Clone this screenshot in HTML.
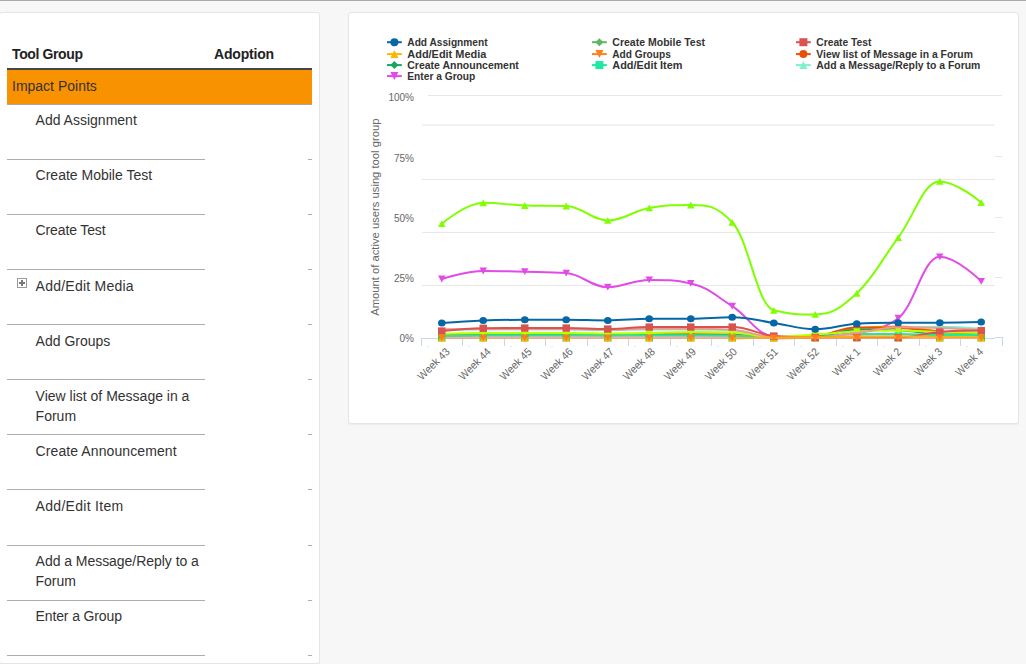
<!DOCTYPE html>
<html><head><meta charset="utf-8"><title>Tool adoption</title>
<style>
html,body{margin:0;padding:0}
body{width:1026px;height:664px;overflow:hidden;background:#f7f7f7;position:relative;font-family:"Liberation Sans",sans-serif;color:#333}
.topbar{position:absolute;left:0;top:0;width:1026px;height:1px;background:#a9a9a9}
.card{position:absolute;background:#fff;border:1px solid #e5e5e5;border-radius:3px;box-sizing:border-box;box-shadow:0 1px 1px rgba(0,0,0,.05)}
#c1{left:-1px;top:12px;width:321px;height:652px}
#c2{left:348px;top:12px;width:671px;height:412px}
.th{position:absolute;font-weight:bold;font-size:14px;line-height:20px;white-space:nowrap;color:#222;letter-spacing:-0.38px}
.hb{position:absolute;left:7px;top:68px;width:305px;height:2px;background:#444}
.imp{position:absolute;left:7px;top:70px;width:305px;height:34px;background:#f99200;border-bottom:1px solid #aaa}
.imp span{position:absolute;left:5px;top:6px;font-size:14px;line-height:20px;white-space:nowrap;color:#333}
.rw{position:absolute;left:35.6px;font-size:14px;line-height:20px;white-space:nowrap;color:#333}
.ln{position:absolute;left:7px;width:198px;height:1px;background:#adadad}
.tk{position:absolute;left:308px;width:4px;height:1px;background:#adadad}
.plus{position:absolute;left:17px;top:278px;width:10px;height:10px;box-sizing:border-box;border:1px solid #9a9a9a;background:#fff}
.plus i{position:absolute;left:1px;top:3px;width:6px;height:2px;background:#7a7a7a}
.plus b{position:absolute;left:3px;top:1px;width:2px;height:6px;background:#7a7a7a}
svg.chart{position:absolute;left:0;top:0}
svg text{font-family:"Liberation Sans",sans-serif}
.ax{font-size:11px;fill:#666}
.ay{font-size:10px;fill:#666}
.lg{font-size:11px;font-weight:bold;fill:#333}
</style></head><body>
<div class="topbar"></div>
<div class="card" id="c1"></div>
<div class="card" id="c2"></div>
<div class="th" style="left:12px;top:44px">Tool Group</div>
<div class="th" style="left:214px;top:44px;letter-spacing:-0.18px">Adoption</div>
<div class="hb"></div>
<div class="imp"><span>Impact Points</span></div>
<div class="rw" style="top:110px">Add Assignment</div>
<div class="ln" style="top:159px"></div><div class="tk" style="top:159px"></div>
<div class="rw" style="top:165px">Create Mobile Test</div>
<div class="ln" style="top:214px"></div><div class="tk" style="top:214px"></div>
<div class="rw" style="top:220px;letter-spacing:-0.13px">Create Test</div>
<div class="ln" style="top:269px"></div><div class="tk" style="top:269px"></div>
<div class="rw" style="top:276px;letter-spacing:0.24px">Add/Edit Media</div>
<div class="ln" style="top:324px"></div><div class="tk" style="top:324px"></div>
<div class="rw" style="top:331px">Add Groups</div>
<div class="ln" style="top:379px"></div><div class="tk" style="top:379px"></div>
<div class="rw" style="top:386px">View list of Message in a<br>Forum</div>
<div class="ln" style="top:434px"></div><div class="tk" style="top:434px"></div>
<div class="rw" style="top:441px;letter-spacing:0.09px">Create Announcement</div>
<div class="ln" style="top:489px"></div><div class="tk" style="top:489px"></div>
<div class="rw" style="top:496px;letter-spacing:0.3px">Add/Edit Item</div>
<div class="ln" style="top:545px"></div><div class="tk" style="top:545px"></div>
<div class="rw" style="top:551px;letter-spacing:-0.04px">Add a Message/Reply to a<br>Forum</div>
<div class="ln" style="top:600px"></div><div class="tk" style="top:600px"></div>
<div class="rw" style="top:606px;letter-spacing:-0.13px">Enter a Group</div>
<div class="ln" style="top:655px"></div><div class="tk" style="top:655px"></div>
<div class="plus"><i></i><b></b></div>
<svg class="chart" width="1026" height="664" viewBox="0 0 1026 664">
<path d="M428 95.5H1002" stroke="#e6e6e6" stroke-width="1" fill="none"/>
<path d="M995 156.5H1002" stroke="#e6e6e6" stroke-width="1" fill="none"/>
<path d="M995 217.5H1002" stroke="#e6e6e6" stroke-width="1" fill="none"/>
<path d="M995 277.5H1002" stroke="#e6e6e6" stroke-width="1" fill="none"/>
<path d="M422 125.0H995" stroke="#e6e6e6" stroke-width="1" fill="none"/>
<path d="M422 179.4H995" stroke="#e6e6e6" stroke-width="1" fill="none"/>
<path d="M422 232.4H995" stroke="#e6e6e6" stroke-width="1" fill="none"/>
<path d="M422 285.4H995" stroke="#e6e6e6" stroke-width="1" fill="none"/>
<path d="M421 338.5H995M995 337.5H1002" stroke="#ccd6eb" stroke-width="1" fill="none"/>
<path d="M421.5 338V346M462.5 338V346M504.5 338V346M545.5 338V346M587.5 338V346M628.5 338V346M670.5 338V346M711.5 338V346M753.5 338V346M794.5 338V346M836.5 338V346M877.5 338V346M919.5 338V346M960.5 338V346M1002.5 337V346" stroke="#ccd6eb" stroke-width="1" fill="none"/>
<path d="M427.0 346.5h2M468.0 346.5h2M510.0 346.5h2M551.0 346.5h2M593.0 346.5h2M634.0 346.5h2M676.0 346.5h2M717.0 346.5h2M759.0 346.5h2M800.0 346.5h2M842.0 346.5h2M883.0 346.5h2M925.0 346.5h2M966.0 346.5h2" stroke="#e4e8f2" stroke-width="1" fill="none"/>
<text x="414" y="101" text-anchor="end" class="ay">100%</text>
<text x="414" y="162" text-anchor="end" class="ay">75%</text>
<text x="414" y="222" text-anchor="end" class="ay">50%</text>
<text x="414" y="282" text-anchor="end" class="ay">25%</text>
<text x="414" y="342" text-anchor="end" class="ay">0%</text>
<text transform="translate(379.2,217.2) rotate(-90)" text-anchor="middle" class="ax" textLength="197.3" lengthAdjust="spacingAndGlyphs">Amount of active users using tool group</text>
<text transform="translate(450.4,352.4) rotate(-45)" text-anchor="end" class="ax" textLength="40.0" lengthAdjust="spacingAndGlyphs">Week 43</text>
<text transform="translate(491.5,352.4) rotate(-45)" text-anchor="end" class="ax" textLength="40.0" lengthAdjust="spacingAndGlyphs">Week 44</text>
<text transform="translate(532.5,352.4) rotate(-45)" text-anchor="end" class="ax" textLength="40.0" lengthAdjust="spacingAndGlyphs">Week 45</text>
<text transform="translate(573.6,352.4) rotate(-45)" text-anchor="end" class="ax" textLength="40.0" lengthAdjust="spacingAndGlyphs">Week 46</text>
<text transform="translate(614.6,352.4) rotate(-45)" text-anchor="end" class="ax" textLength="40.0" lengthAdjust="spacingAndGlyphs">Week 47</text>
<text transform="translate(655.7,352.4) rotate(-45)" text-anchor="end" class="ax" textLength="40.0" lengthAdjust="spacingAndGlyphs">Week 48</text>
<text transform="translate(696.7,352.4) rotate(-45)" text-anchor="end" class="ax" textLength="40.0" lengthAdjust="spacingAndGlyphs">Week 49</text>
<text transform="translate(737.7,352.4) rotate(-45)" text-anchor="end" class="ax" textLength="40.0" lengthAdjust="spacingAndGlyphs">Week 50</text>
<text transform="translate(778.8,352.4) rotate(-45)" text-anchor="end" class="ax" textLength="40.0" lengthAdjust="spacingAndGlyphs">Week 51</text>
<text transform="translate(819.8,352.4) rotate(-45)" text-anchor="end" class="ax" textLength="40.0" lengthAdjust="spacingAndGlyphs">Week 52</text>
<text transform="translate(860.9,352.4) rotate(-45)" text-anchor="end" class="ax" textLength="34.3" lengthAdjust="spacingAndGlyphs">Week 1</text>
<text transform="translate(901.9,352.4) rotate(-45)" text-anchor="end" class="ax" textLength="34.3" lengthAdjust="spacingAndGlyphs">Week 2</text>
<text transform="translate(942.9,352.4) rotate(-45)" text-anchor="end" class="ax" textLength="34.3" lengthAdjust="spacingAndGlyphs">Week 3</text>
<text transform="translate(984.0,352.4) rotate(-45)" text-anchor="end" class="ax" textLength="34.3" lengthAdjust="spacingAndGlyphs">Week 4</text>
<path d="M441.8 337.2 C441.8 337.2 466.6 337.2 483.2 337.2 C499.9 337.2 508.1 337.2 524.8 337.2 C541.4 337.2 549.6 337.2 566.2 337.2 C582.9 337.2 591.1 337.2 607.8 337.2 C624.4 337.2 632.6 337.2 649.2 337.2 C665.9 337.2 674.1 337.2 690.8 337.2 C707.4 337.2 715.6 337.2 732.2 337.2 C748.9 337.2 757.1 337.6 773.8 337.6 C790.4 337.6 798.6 337.6 815.2 337.6 C831.9 337.6 840.1 336.0 856.8 336.0 C873.4 336.0 881.6 336.3 898.2 336.5 C914.9 336.7 923.1 337.0 939.8 337.0 C956.4 337.0 981.2 337.0 981.2 337.0" stroke="#ffb3e6" stroke-width="2" fill="none" stroke-linejoin="round" stroke-linecap="round"/>
<path d="M441.8 279.0 C441.8 279.0 466.6 271.0 483.2 271.0 C499.9 271.0 508.1 271.3 524.8 271.7 C541.4 272.1 549.6 271.7 566.2 273.1 C582.9 274.5 591.1 287.2 607.8 287.2 C624.4 287.2 632.6 279.9 649.2 279.9 C665.9 279.9 674.1 279.9 690.8 283.4 C707.4 286.9 715.6 295.6 732.2 306.2 C748.9 316.8 757.1 335.6 773.8 336.3 C790.4 337.0 798.6 337.0 815.2 337.0 C831.9 337.0 840.1 334.8 856.8 331.0 C873.4 327.2 881.6 331.0 898.2 318.2 C914.9 305.4 923.1 256.8 939.8 256.8 C956.4 256.8 981.2 281.3 981.2 281.3" stroke="#e14be6" stroke-width="2" fill="none" stroke-linejoin="round" stroke-linecap="round"/>
<path d="M438.0 275.6L445.5 275.6L441.8 282.4Z" fill="#e14be6"/><path d="M479.5 267.6L487.0 267.6L483.2 274.4Z" fill="#e14be6"/><path d="M521.0 268.3L528.5 268.3L524.8 275.1Z" fill="#e14be6"/><path d="M562.5 269.7L570.0 269.7L566.2 276.5Z" fill="#e14be6"/><path d="M604.0 283.8L611.5 283.8L607.8 290.6Z" fill="#e14be6"/><path d="M645.5 276.5L653.0 276.5L649.2 283.3Z" fill="#e14be6"/><path d="M687.0 280.0L694.5 280.0L690.8 286.8Z" fill="#e14be6"/><path d="M728.5 302.8L736.0 302.8L732.2 309.6Z" fill="#e14be6"/><path d="M770.0 332.9L777.5 332.9L773.8 339.7Z" fill="#e14be6"/><path d="M811.5 333.6L819.0 333.6L815.2 340.4Z" fill="#e14be6"/><path d="M853.0 327.6L860.5 327.6L856.8 334.4Z" fill="#e14be6"/><path d="M894.5 314.8L902.0 314.8L898.2 321.6Z" fill="#e14be6"/><path d="M936.0 253.4L943.5 253.4L939.8 260.2Z" fill="#e14be6"/><path d="M977.5 277.9L985.0 277.9L981.2 284.7Z" fill="#e14be6"/>
<path d="M441.8 330.3 C441.8 330.3 466.6 329.6 483.2 329.6 C499.9 329.6 508.1 329.6 524.8 329.6 C541.4 329.6 549.6 329.6 566.2 329.6 C582.9 329.6 591.1 330.2 607.8 330.2 C624.4 330.2 632.6 329.4 649.2 329.4 C665.9 329.4 674.1 329.4 690.8 329.4 C707.4 329.4 715.6 329.4 732.2 330.2 C748.9 331.0 757.1 337.0 773.8 337.0 C790.4 337.0 798.6 337.0 815.2 336.0 C831.9 335.0 840.1 331.2 856.8 329.5 C873.4 327.8 881.6 328.0 898.2 327.5 C914.9 327.0 923.1 326.8 939.8 326.8 C956.4 326.8 981.2 328.8 981.2 328.8" stroke="#7ff0cc" stroke-width="2" fill="none" stroke-linejoin="round" stroke-linecap="round"/>
<path d="M441.8 326.9L445.5 333.7L438.0 333.7Z" fill="#7ff0cc"/><path d="M483.2 326.2L487.0 333.0L479.5 333.0Z" fill="#7ff0cc"/><path d="M524.8 326.2L528.5 333.0L521.0 333.0Z" fill="#7ff0cc"/><path d="M566.2 326.2L570.0 333.0L562.5 333.0Z" fill="#7ff0cc"/><path d="M607.8 326.8L611.5 333.6L604.0 333.6Z" fill="#7ff0cc"/><path d="M649.2 326.0L653.0 332.8L645.5 332.8Z" fill="#7ff0cc"/><path d="M690.8 326.0L694.5 332.8L687.0 332.8Z" fill="#7ff0cc"/><path d="M732.2 326.8L736.0 333.6L728.5 333.6Z" fill="#7ff0cc"/><path d="M773.8 333.6L777.5 340.4L770.0 340.4Z" fill="#7ff0cc"/><path d="M815.2 332.6L819.0 339.4L811.5 339.4Z" fill="#7ff0cc"/><path d="M856.8 326.1L860.5 332.9L853.0 332.9Z" fill="#7ff0cc"/><path d="M898.2 324.1L902.0 330.9L894.5 330.9Z" fill="#7ff0cc"/><path d="M939.8 323.4L943.5 330.2L936.0 330.2Z" fill="#7ff0cc"/><path d="M981.2 325.4L985.0 332.2L977.5 332.2Z" fill="#7ff0cc"/>
<path d="M773.8 338.4 C773.8 338.4 798.6 338.4 815.2 337.3 C831.9 336.2 840.1 330.0 856.8 328.3 C873.4 326.6 881.6 326.6 898.2 326.6 C914.9 326.6 923.1 330.1 939.8 331.5 C956.4 332.9 981.2 333.5 981.2 333.5" stroke="#ff8c00" stroke-width="2" fill="none" stroke-linejoin="round" stroke-linecap="round"/>
<path d="M441.8 334.5 C441.8 334.5 466.6 334.0 483.2 334.0 C499.9 334.0 508.1 334.0 524.8 334.0 C541.4 334.0 549.6 334.0 566.2 334.0 C582.9 334.0 591.1 334.3 607.8 334.3 C624.4 334.3 632.6 334.3 649.2 334.3 C665.9 334.3 674.1 334.3 690.8 334.3 C707.4 334.3 715.6 334.3 732.2 334.6 C748.9 334.9 757.1 337.3 773.8 337.3 C790.4 337.3 798.6 337.3 815.2 336.0 C831.9 334.7 840.1 327.4 856.8 327.4 C873.4 327.4 881.6 327.4 898.2 328.0 C914.9 328.6 923.1 330.5 939.8 331.5 C956.4 332.5 981.2 333.0 981.2 333.0" stroke="#e8500a" stroke-width="2" fill="none" stroke-linejoin="round" stroke-linecap="round"/>
<ellipse cx="441.8" cy="334.5" rx="3.75" ry="3.40" fill="#e8500a"/><ellipse cx="483.2" cy="334.0" rx="3.75" ry="3.40" fill="#e8500a"/><ellipse cx="524.8" cy="334.0" rx="3.75" ry="3.40" fill="#e8500a"/><ellipse cx="566.2" cy="334.0" rx="3.75" ry="3.40" fill="#e8500a"/><ellipse cx="607.8" cy="334.3" rx="3.75" ry="3.40" fill="#e8500a"/><ellipse cx="649.2" cy="334.3" rx="3.75" ry="3.40" fill="#e8500a"/><ellipse cx="690.8" cy="334.3" rx="3.75" ry="3.40" fill="#e8500a"/><ellipse cx="732.2" cy="334.6" rx="3.75" ry="3.40" fill="#e8500a"/><ellipse cx="773.8" cy="337.3" rx="3.75" ry="3.40" fill="#e8500a"/><ellipse cx="815.2" cy="336.0" rx="3.75" ry="3.40" fill="#e8500a"/><ellipse cx="856.8" cy="327.4" rx="3.75" ry="3.40" fill="#e8500a"/><ellipse cx="898.2" cy="328.0" rx="3.75" ry="3.40" fill="#e8500a"/><ellipse cx="939.8" cy="331.5" rx="3.75" ry="3.40" fill="#e8500a"/><ellipse cx="981.2" cy="333.0" rx="3.75" ry="3.40" fill="#e8500a"/>
<path d="M441.8 335.8 C441.8 335.8 466.6 335.4 483.2 335.4 C499.9 335.4 508.1 335.4 524.8 335.4 C541.4 335.4 549.6 335.4 566.2 335.4 C582.9 335.4 591.1 335.5 607.8 335.5 C624.4 335.5 632.6 335.4 649.2 335.4 C665.9 335.4 674.1 335.4 690.8 335.4 C707.4 335.4 715.6 335.4 732.2 335.6 C748.9 335.8 757.1 337.5 773.8 337.5 C790.4 337.5 798.6 337.5 815.2 337.0 C831.9 336.5 840.1 329.5 856.8 329.5 C873.4 329.5 881.6 329.6 898.2 330.5 C914.9 331.4 923.1 333.5 939.8 334.0 C956.4 334.5 981.2 334.5 981.2 334.5" stroke="#18a562" stroke-width="1.5" fill="none" stroke-linejoin="round" stroke-linecap="round"/>
<path d="M441.8 335.8 C441.8 335.8 466.6 335.3 483.2 335.3 C499.9 335.3 508.1 335.3 524.8 335.3 C541.4 335.3 549.6 335.3 566.2 335.3 C582.9 335.3 591.1 335.4 607.8 335.4 C624.4 335.4 632.6 335.3 649.2 335.3 C665.9 335.3 674.1 335.3 690.8 335.3 C707.4 335.3 715.6 335.3 732.2 335.6 C748.9 335.9 757.1 337.4 773.8 337.4 C790.4 337.4 798.6 337.4 815.2 337.0 C831.9 336.6 840.1 334.0 856.8 334.0 C873.4 334.0 881.6 334.0 898.2 334.0 C914.9 334.0 923.1 335.0 939.8 335.0 C956.4 335.0 981.2 335.0 981.2 335.0" stroke="#1de9a0" stroke-width="2" fill="none" stroke-linejoin="round" stroke-linecap="round"/>
<rect x="438.0" y="333.9" width="7.5" height="3.8" fill="#1de9a0"/><rect x="479.5" y="333.4" width="7.5" height="3.8" fill="#1de9a0"/><rect x="521.0" y="333.4" width="7.5" height="3.8" fill="#1de9a0"/><rect x="562.5" y="333.4" width="7.5" height="3.8" fill="#1de9a0"/><rect x="604.0" y="333.5" width="7.5" height="3.8" fill="#1de9a0"/><rect x="645.5" y="333.4" width="7.5" height="3.8" fill="#1de9a0"/><rect x="687.0" y="333.4" width="7.5" height="3.8" fill="#1de9a0"/><rect x="728.5" y="333.7" width="7.5" height="3.8" fill="#1de9a0"/><rect x="770.0" y="335.5" width="7.5" height="3.8" fill="#1de9a0"/><rect x="811.5" y="335.1" width="7.5" height="3.8" fill="#1de9a0"/><rect x="853.0" y="332.1" width="7.5" height="3.8" fill="#1de9a0"/><rect x="894.5" y="332.1" width="7.5" height="3.8" fill="#1de9a0"/><rect x="936.0" y="333.1" width="7.5" height="3.8" fill="#1de9a0"/><rect x="977.5" y="333.1" width="7.5" height="3.8" fill="#1de9a0"/>
<rect x="438.0" y="334.6" width="7.5" height="6.8" fill="#3ad11f"/><rect x="479.5" y="334.6" width="7.5" height="6.8" fill="#3ad11f"/><rect x="521.0" y="334.6" width="7.5" height="6.8" fill="#3ad11f"/><rect x="562.5" y="334.6" width="7.5" height="6.8" fill="#3ad11f"/><rect x="604.0" y="334.6" width="7.5" height="6.8" fill="#3ad11f"/><rect x="645.5" y="334.6" width="7.5" height="6.8" fill="#3ad11f"/><rect x="687.0" y="334.6" width="7.5" height="6.8" fill="#3ad11f"/><rect x="728.5" y="334.6" width="7.5" height="6.8" fill="#3ad11f"/><rect x="770.0" y="334.6" width="7.5" height="6.8" fill="#3ad11f"/><rect x="811.5" y="334.6" width="7.5" height="6.8" fill="#3ad11f"/><rect x="853.0" y="334.6" width="7.5" height="6.8" fill="#3ad11f"/><rect x="894.5" y="334.6" width="7.5" height="6.8" fill="#3ad11f"/><rect x="936.0" y="334.6" width="7.5" height="6.8" fill="#3ad11f"/><rect x="977.5" y="334.6" width="7.5" height="6.8" fill="#3ad11f"/>
<path d="M441.8 334.6L445.5 341.4L438.0 341.4Z" fill="#ffb400"/><path d="M483.2 334.6L487.0 341.4L479.5 341.4Z" fill="#ffb400"/><path d="M524.8 334.6L528.5 341.4L521.0 341.4Z" fill="#ffb400"/><path d="M566.2 334.6L570.0 341.4L562.5 341.4Z" fill="#ffb400"/><path d="M607.8 334.6L611.5 341.4L604.0 341.4Z" fill="#ffb400"/><path d="M649.2 334.6L653.0 341.4L645.5 341.4Z" fill="#ffb400"/><path d="M690.8 334.6L694.5 341.4L687.0 341.4Z" fill="#ffb400"/><path d="M732.2 334.6L736.0 341.4L728.5 341.4Z" fill="#ffb400"/><path d="M773.8 334.6L777.5 341.4L770.0 341.4Z" fill="#ffb400"/><path d="M815.2 334.6L819.0 341.4L811.5 341.4Z" fill="#ffb400"/><path d="M856.8 333.6L860.5 340.4L853.0 340.4Z" fill="#ffb400"/><path d="M898.2 334.6L902.0 341.4L894.5 341.4Z" fill="#ffb400"/><path d="M939.8 334.6L943.5 341.4L936.0 341.4Z" fill="#ffb400"/><path d="M981.2 334.6L985.0 341.4L977.5 341.4Z" fill="#ffb400"/>
<path d="M441.8 334.0 C441.8 334.0 466.6 333.0 483.2 333.0 C499.9 333.0 508.1 333.0 524.8 333.0 C541.4 333.0 549.6 333.0 566.2 333.0 C582.9 333.0 591.1 333.5 607.8 333.5 C624.4 333.5 632.6 333.3 649.2 333.0 C665.9 332.7 674.1 332.0 690.8 332.0 C707.4 332.0 715.6 332.0 732.2 332.6 C748.9 333.2 757.1 337.0 773.8 337.0 C790.4 337.0 798.6 335.6 815.2 334.5 C831.9 333.4 840.1 332.4 856.8 331.6 C873.4 330.8 881.6 330.6 898.2 330.6 C914.9 330.6 923.1 331.5 939.8 332.0 C956.4 332.5 981.2 333.0 981.2 333.0" stroke="#b9ff00" stroke-width="2" fill="none" stroke-linejoin="round" stroke-linecap="round"/>
<path d="M438.0 330.6L445.5 330.6L441.8 337.4Z" fill="#b9ff00"/><path d="M479.5 329.6L487.0 329.6L483.2 336.4Z" fill="#b9ff00"/><path d="M521.0 329.6L528.5 329.6L524.8 336.4Z" fill="#b9ff00"/><path d="M562.5 329.6L570.0 329.6L566.2 336.4Z" fill="#b9ff00"/><path d="M604.0 330.1L611.5 330.1L607.8 336.9Z" fill="#b9ff00"/><path d="M645.5 329.6L653.0 329.6L649.2 336.4Z" fill="#b9ff00"/><path d="M687.0 328.6L694.5 328.6L690.8 335.4Z" fill="#b9ff00"/><path d="M728.5 329.2L736.0 329.2L732.2 336.0Z" fill="#b9ff00"/><path d="M770.0 333.6L777.5 333.6L773.8 340.4Z" fill="#b9ff00"/><path d="M811.5 331.1L819.0 331.1L815.2 337.9Z" fill="#b9ff00"/><path d="M853.0 328.2L860.5 328.2L856.8 335.0Z" fill="#b9ff00"/><path d="M894.5 327.2L902.0 327.2L898.2 334.0Z" fill="#b9ff00"/><path d="M936.0 328.6L943.5 328.6L939.8 335.4Z" fill="#b9ff00"/><path d="M977.5 329.6L985.0 329.6L981.2 336.4Z" fill="#b9ff00"/>
<path d="M441.8 329.2 C441.8 329.2 466.6 329.0 483.2 329.0 C499.9 329.0 508.1 329.0 524.8 329.0 C541.4 329.0 549.6 329.0 566.2 329.0 C582.9 329.0 591.1 329.7 607.8 329.7 C624.4 329.7 632.6 328.7 649.2 328.7 C665.9 328.7 674.1 328.7 690.8 328.7 C707.4 328.7 715.6 328.7 732.2 329.7 C748.9 330.7 757.1 336.7 773.8 337.0 C790.4 337.3 798.6 337.3 815.2 337.3 C831.9 337.3 840.1 335.0 856.8 333.0 C873.4 331.0 881.6 327.2 898.2 327.2 C914.9 327.2 923.1 327.4 939.8 328.0 C956.4 328.6 981.2 330.0 981.2 330.0" stroke="#ec9a94" stroke-width="2" fill="none" stroke-linejoin="round" stroke-linecap="round"/>
<path d="M441.8 331.0 C441.8 331.0 466.6 328.4 483.2 328.2 C499.9 328.0 508.1 328.0 524.8 328.0 C541.4 328.0 549.6 328.0 566.2 328.0 C582.9 328.0 591.1 329.0 607.8 329.0 C624.4 329.0 632.6 327.0 649.2 327.0 C665.9 327.0 674.1 327.0 690.8 327.0 C707.4 327.0 715.6 327.0 732.2 327.0 C748.9 327.0 757.1 334.5 773.8 336.0 C790.4 337.5 798.6 337.5 815.2 337.5 C831.9 337.5 840.1 337.5 856.8 337.5 C873.4 337.5 881.6 337.5 898.2 337.5 C914.9 337.5 923.1 333.4 939.8 332.0 C956.4 330.6 981.2 330.6 981.2 330.6" stroke="#d9534f" stroke-width="2" fill="none" stroke-linejoin="round" stroke-linecap="round"/>
<rect x="438.0" y="327.4" width="7.5" height="7.3" fill="#d9534f"/><rect x="479.5" y="324.6" width="7.5" height="7.3" fill="#d9534f"/><rect x="521.0" y="324.4" width="7.5" height="7.3" fill="#d9534f"/><rect x="562.5" y="324.4" width="7.5" height="7.3" fill="#d9534f"/><rect x="604.0" y="325.4" width="7.5" height="7.3" fill="#d9534f"/><rect x="645.5" y="323.4" width="7.5" height="7.3" fill="#d9534f"/><rect x="687.0" y="323.4" width="7.5" height="7.3" fill="#d9534f"/><rect x="728.5" y="323.4" width="7.5" height="7.3" fill="#d9534f"/><rect x="770.0" y="332.4" width="7.5" height="7.3" fill="#d9534f"/><rect x="811.5" y="333.9" width="7.5" height="7.3" fill="#d9534f"/><rect x="853.0" y="333.9" width="7.5" height="7.3" fill="#d9534f"/><rect x="894.5" y="333.9" width="7.5" height="7.3" fill="#d9534f"/><rect x="936.0" y="328.4" width="7.5" height="7.3" fill="#d9534f"/><rect x="977.5" y="327.0" width="7.5" height="7.3" fill="#d9534f"/>
<path d="M732.2 338.5 C732.2 338.5 757.1 337.5 773.8 337.4 C790.4 337.3 798.6 337.4 815.2 337.3 C831.9 337.2 840.1 336.8 856.8 336.6 C873.4 336.4 881.6 336.2 898.2 336.2 C914.9 336.2 923.1 336.6 939.8 336.8 C956.4 337.0 981.2 337.2 981.2 337.2" stroke="#ffb000" stroke-width="2" fill="none" stroke-linejoin="round" stroke-linecap="round"/>
<path d="M441.8 338.2 C441.8 338.2 466.6 338.2 483.2 338.2 C499.9 338.2 508.1 338.2 524.8 338.2 C541.4 338.2 549.6 338.2 566.2 338.2 C582.9 338.2 591.1 338.2 607.8 338.2 C624.4 338.2 632.6 338.2 649.2 338.2 C665.9 338.2 674.1 338.2 690.8 338.2 C707.4 338.2 715.6 338.2 732.2 338.2 C748.9 338.2 757.1 338.2 773.8 338.2 C790.4 338.2 798.6 338.2 815.2 338.2 C831.9 338.2 840.1 338.2 856.8 338.2 C873.4 338.2 881.6 338.2 898.2 338.2 C914.9 338.2 923.1 338.2 939.8 338.2 C956.4 338.2 981.2 338.2 981.2 338.2" stroke="#f2a05c" stroke-width="1.2" fill="none" stroke-linejoin="round" stroke-linecap="round"/>
<path d="M438.0 334.6L445.5 334.6L441.8 341.4Z" fill="#ff7f1e"/><path d="M479.5 334.6L487.0 334.6L483.2 341.4Z" fill="#ff7f1e"/><path d="M521.0 334.6L528.5 334.6L524.8 341.4Z" fill="#ff7f1e"/><path d="M562.5 334.6L570.0 334.6L566.2 341.4Z" fill="#ff7f1e"/><path d="M604.0 334.6L611.5 334.6L607.8 341.4Z" fill="#ff7f1e"/><path d="M645.5 334.6L653.0 334.6L649.2 341.4Z" fill="#ff7f1e"/><path d="M687.0 334.6L694.5 334.6L690.8 341.4Z" fill="#ff7f1e"/><path d="M728.5 334.6L736.0 334.6L732.2 341.4Z" fill="#ff7f1e"/><path d="M770.0 334.6L777.5 334.6L773.8 341.4Z" fill="#ff7f1e"/><path d="M811.5 334.6L819.0 334.6L815.2 341.4Z" fill="#ff7f1e"/><path d="M853.0 334.6L860.5 334.6L856.8 341.4Z" fill="#ff7f1e"/><path d="M894.5 334.6L902.0 334.6L898.2 341.4Z" fill="#ff7f1e"/><path d="M936.0 334.6L943.5 334.6L939.8 341.4Z" fill="#ff7f1e"/><path d="M977.5 334.6L985.0 334.6L981.2 341.4Z" fill="#ff7f1e"/>
<path d="M441.8 322.9 C441.8 322.9 466.6 321.0 483.2 320.4 C499.9 319.8 508.1 319.8 524.8 319.8 C541.4 319.8 549.6 319.8 566.2 319.8 C582.9 319.8 591.1 320.4 607.8 320.4 C624.4 320.4 632.6 318.8 649.2 318.8 C665.9 318.8 674.1 318.8 690.8 318.8 C707.4 318.8 715.6 317.2 732.2 317.2 C748.9 317.2 757.1 320.5 773.8 322.9 C790.4 325.3 798.6 329.2 815.2 329.2 C831.9 329.2 840.1 324.8 856.8 323.8 C873.4 322.8 881.6 322.9 898.2 322.8 C914.9 322.7 923.1 322.8 939.8 322.7 C956.4 322.6 981.2 322.1 981.2 322.1" stroke="#0667a6" stroke-width="2" fill="none" stroke-linejoin="round" stroke-linecap="round"/>
<ellipse cx="441.8" cy="322.9" rx="3.80" ry="3.50" fill="#0667a6"/><ellipse cx="483.2" cy="320.4" rx="3.80" ry="3.50" fill="#0667a6"/><ellipse cx="524.8" cy="319.8" rx="3.80" ry="3.50" fill="#0667a6"/><ellipse cx="566.2" cy="319.8" rx="3.80" ry="3.50" fill="#0667a6"/><ellipse cx="607.8" cy="320.4" rx="3.80" ry="3.50" fill="#0667a6"/><ellipse cx="649.2" cy="318.8" rx="3.80" ry="3.50" fill="#0667a6"/><ellipse cx="690.8" cy="318.8" rx="3.80" ry="3.50" fill="#0667a6"/><ellipse cx="732.2" cy="317.2" rx="3.80" ry="3.50" fill="#0667a6"/><ellipse cx="773.8" cy="322.9" rx="3.80" ry="3.50" fill="#0667a6"/><ellipse cx="815.2" cy="329.2" rx="3.80" ry="3.50" fill="#0667a6"/><ellipse cx="856.8" cy="323.8" rx="3.80" ry="3.50" fill="#0667a6"/><ellipse cx="898.2" cy="322.8" rx="3.80" ry="3.50" fill="#0667a6"/><ellipse cx="939.8" cy="322.7" rx="3.80" ry="3.50" fill="#0667a6"/><ellipse cx="981.2" cy="322.1" rx="3.80" ry="3.50" fill="#0667a6"/>
<path d="M441.8 223.7 C441.8 223.7 466.6 202.8 483.2 202.8 C499.9 202.8 508.1 205.0 524.8 205.5 C541.4 206.0 549.6 205.5 566.2 206.0 C582.9 206.5 591.1 220.4 607.8 220.4 C624.4 220.4 632.6 210.8 649.2 207.9 C665.9 205.0 674.1 205.0 690.8 205.0 C707.4 205.0 715.6 205.0 732.2 222.3 C748.9 239.6 757.1 306.2 773.8 310.3 C790.4 314.4 798.6 314.4 815.2 314.4 C831.9 314.4 840.1 308.7 856.8 293.3 C873.4 277.9 881.6 260.0 898.2 237.6 C914.9 215.2 923.1 181.4 939.8 181.4 C956.4 181.4 981.2 202.5 981.2 202.5" stroke="#7fff00" stroke-width="2" fill="none" stroke-linejoin="round" stroke-linecap="round"/>
<path d="M441.8 220.3L445.5 227.1L438.0 227.1Z" fill="#7fff00"/><path d="M483.2 199.4L487.0 206.2L479.5 206.2Z" fill="#7fff00"/><path d="M524.8 202.1L528.5 208.9L521.0 208.9Z" fill="#7fff00"/><path d="M566.2 202.6L570.0 209.4L562.5 209.4Z" fill="#7fff00"/><path d="M607.8 217.0L611.5 223.8L604.0 223.8Z" fill="#7fff00"/><path d="M649.2 204.5L653.0 211.3L645.5 211.3Z" fill="#7fff00"/><path d="M690.8 201.6L694.5 208.4L687.0 208.4Z" fill="#7fff00"/><path d="M732.2 218.9L736.0 225.7L728.5 225.7Z" fill="#7fff00"/><path d="M773.8 306.9L777.5 313.7L770.0 313.7Z" fill="#7fff00"/><path d="M815.2 311.0L819.0 317.8L811.5 317.8Z" fill="#7fff00"/><path d="M856.8 289.9L860.5 296.7L853.0 296.7Z" fill="#7fff00"/><path d="M898.2 234.2L902.0 241.0L894.5 241.0Z" fill="#7fff00"/><path d="M939.8 178.0L943.5 184.8L936.0 184.8Z" fill="#7fff00"/><path d="M981.2 199.1L985.0 205.9L977.5 205.9Z" fill="#7fff00"/>
<path d="M387 42.2H401.8" stroke="#0667a6" stroke-width="2" fill="none"/>
<ellipse cx="394.4" cy="42.2" rx="4.00" ry="4.00" fill="#0667a6"/>
<text x="407.3" y="45.7" class="lg" textLength="80.3" lengthAdjust="spacingAndGlyphs">Add Assignment</text>
<path d="M387 54.1H401.8" stroke="#ffb400" stroke-width="2" fill="none"/>
<path d="M394.4 50.1L398.4 58.1L390.4 58.1Z" fill="#ffb400"/>
<text x="407.3" y="57.6" class="lg" textLength="79" lengthAdjust="spacingAndGlyphs">Add/Edit Media</text>
<path d="M387 65.1H401.8" stroke="#18a562" stroke-width="2" fill="none"/>
<path d="M394.4 61.1L398.4 65.1L394.4 69.1L390.4 65.1Z" fill="#18a562"/>
<text x="407.3" y="68.6" class="lg" textLength="111.5" lengthAdjust="spacingAndGlyphs">Create Announcement</text>
<path d="M387 76.1H401.8" stroke="#e14be6" stroke-width="2" fill="none"/>
<path d="M390.4 72.1L398.4 72.1L394.4 80.1Z" fill="#e14be6"/>
<text x="407.3" y="79.6" class="lg" textLength="68" lengthAdjust="spacingAndGlyphs">Enter a Group</text>
<path d="M592 42.2H606.8" stroke="#5cb85c" stroke-width="2" fill="none"/>
<path d="M599.4 38.2L603.4 42.2L599.4 46.2L595.4 42.2Z" fill="#5cb85c"/>
<text x="612.3" y="45.7" class="lg" textLength="92.8" lengthAdjust="spacingAndGlyphs">Create Mobile Test</text>
<path d="M592 54.1H606.8" stroke="#ff7f1e" stroke-width="2" fill="none"/>
<path d="M595.4 50.1L603.4 50.1L599.4 58.1Z" fill="#ff7f1e"/>
<text x="612.3" y="57.6" class="lg" textLength="58.5" lengthAdjust="spacingAndGlyphs">Add Groups</text>
<path d="M592 65.1H606.8" stroke="#1de9a0" stroke-width="2" fill="none"/>
<rect x="595.4" y="61.1" width="8.0" height="8.0" fill="#1de9a0"/>
<text x="612.3" y="68.6" class="lg" textLength="70.2" lengthAdjust="spacingAndGlyphs">Add/Edit Item</text>
<path d="M796 42.2H810.8" stroke="#d9534f" stroke-width="2" fill="none"/>
<rect x="799.4" y="38.2" width="8.0" height="8.0" fill="#d9534f"/>
<text x="816.3" y="45.7" class="lg" textLength="55.1" lengthAdjust="spacingAndGlyphs">Create Test</text>
<path d="M796 54.1H810.8" stroke="#e8500a" stroke-width="2" fill="none"/>
<ellipse cx="803.4" cy="54.1" rx="4.00" ry="4.00" fill="#e8500a"/>
<text x="816.3" y="57.6" class="lg" textLength="156.6" lengthAdjust="spacingAndGlyphs">View list of Message in a Forum</text>
<path d="M796 65.1H810.8" stroke="#7ff0cc" stroke-width="2" fill="none"/>
<path d="M803.4 61.1L807.4 69.1L799.4 69.1Z" fill="#7ff0cc"/>
<text x="816.3" y="68.6" class="lg" textLength="164.1" lengthAdjust="spacingAndGlyphs">Add a Message/Reply to a Forum</text>
</svg>
</body></html>
